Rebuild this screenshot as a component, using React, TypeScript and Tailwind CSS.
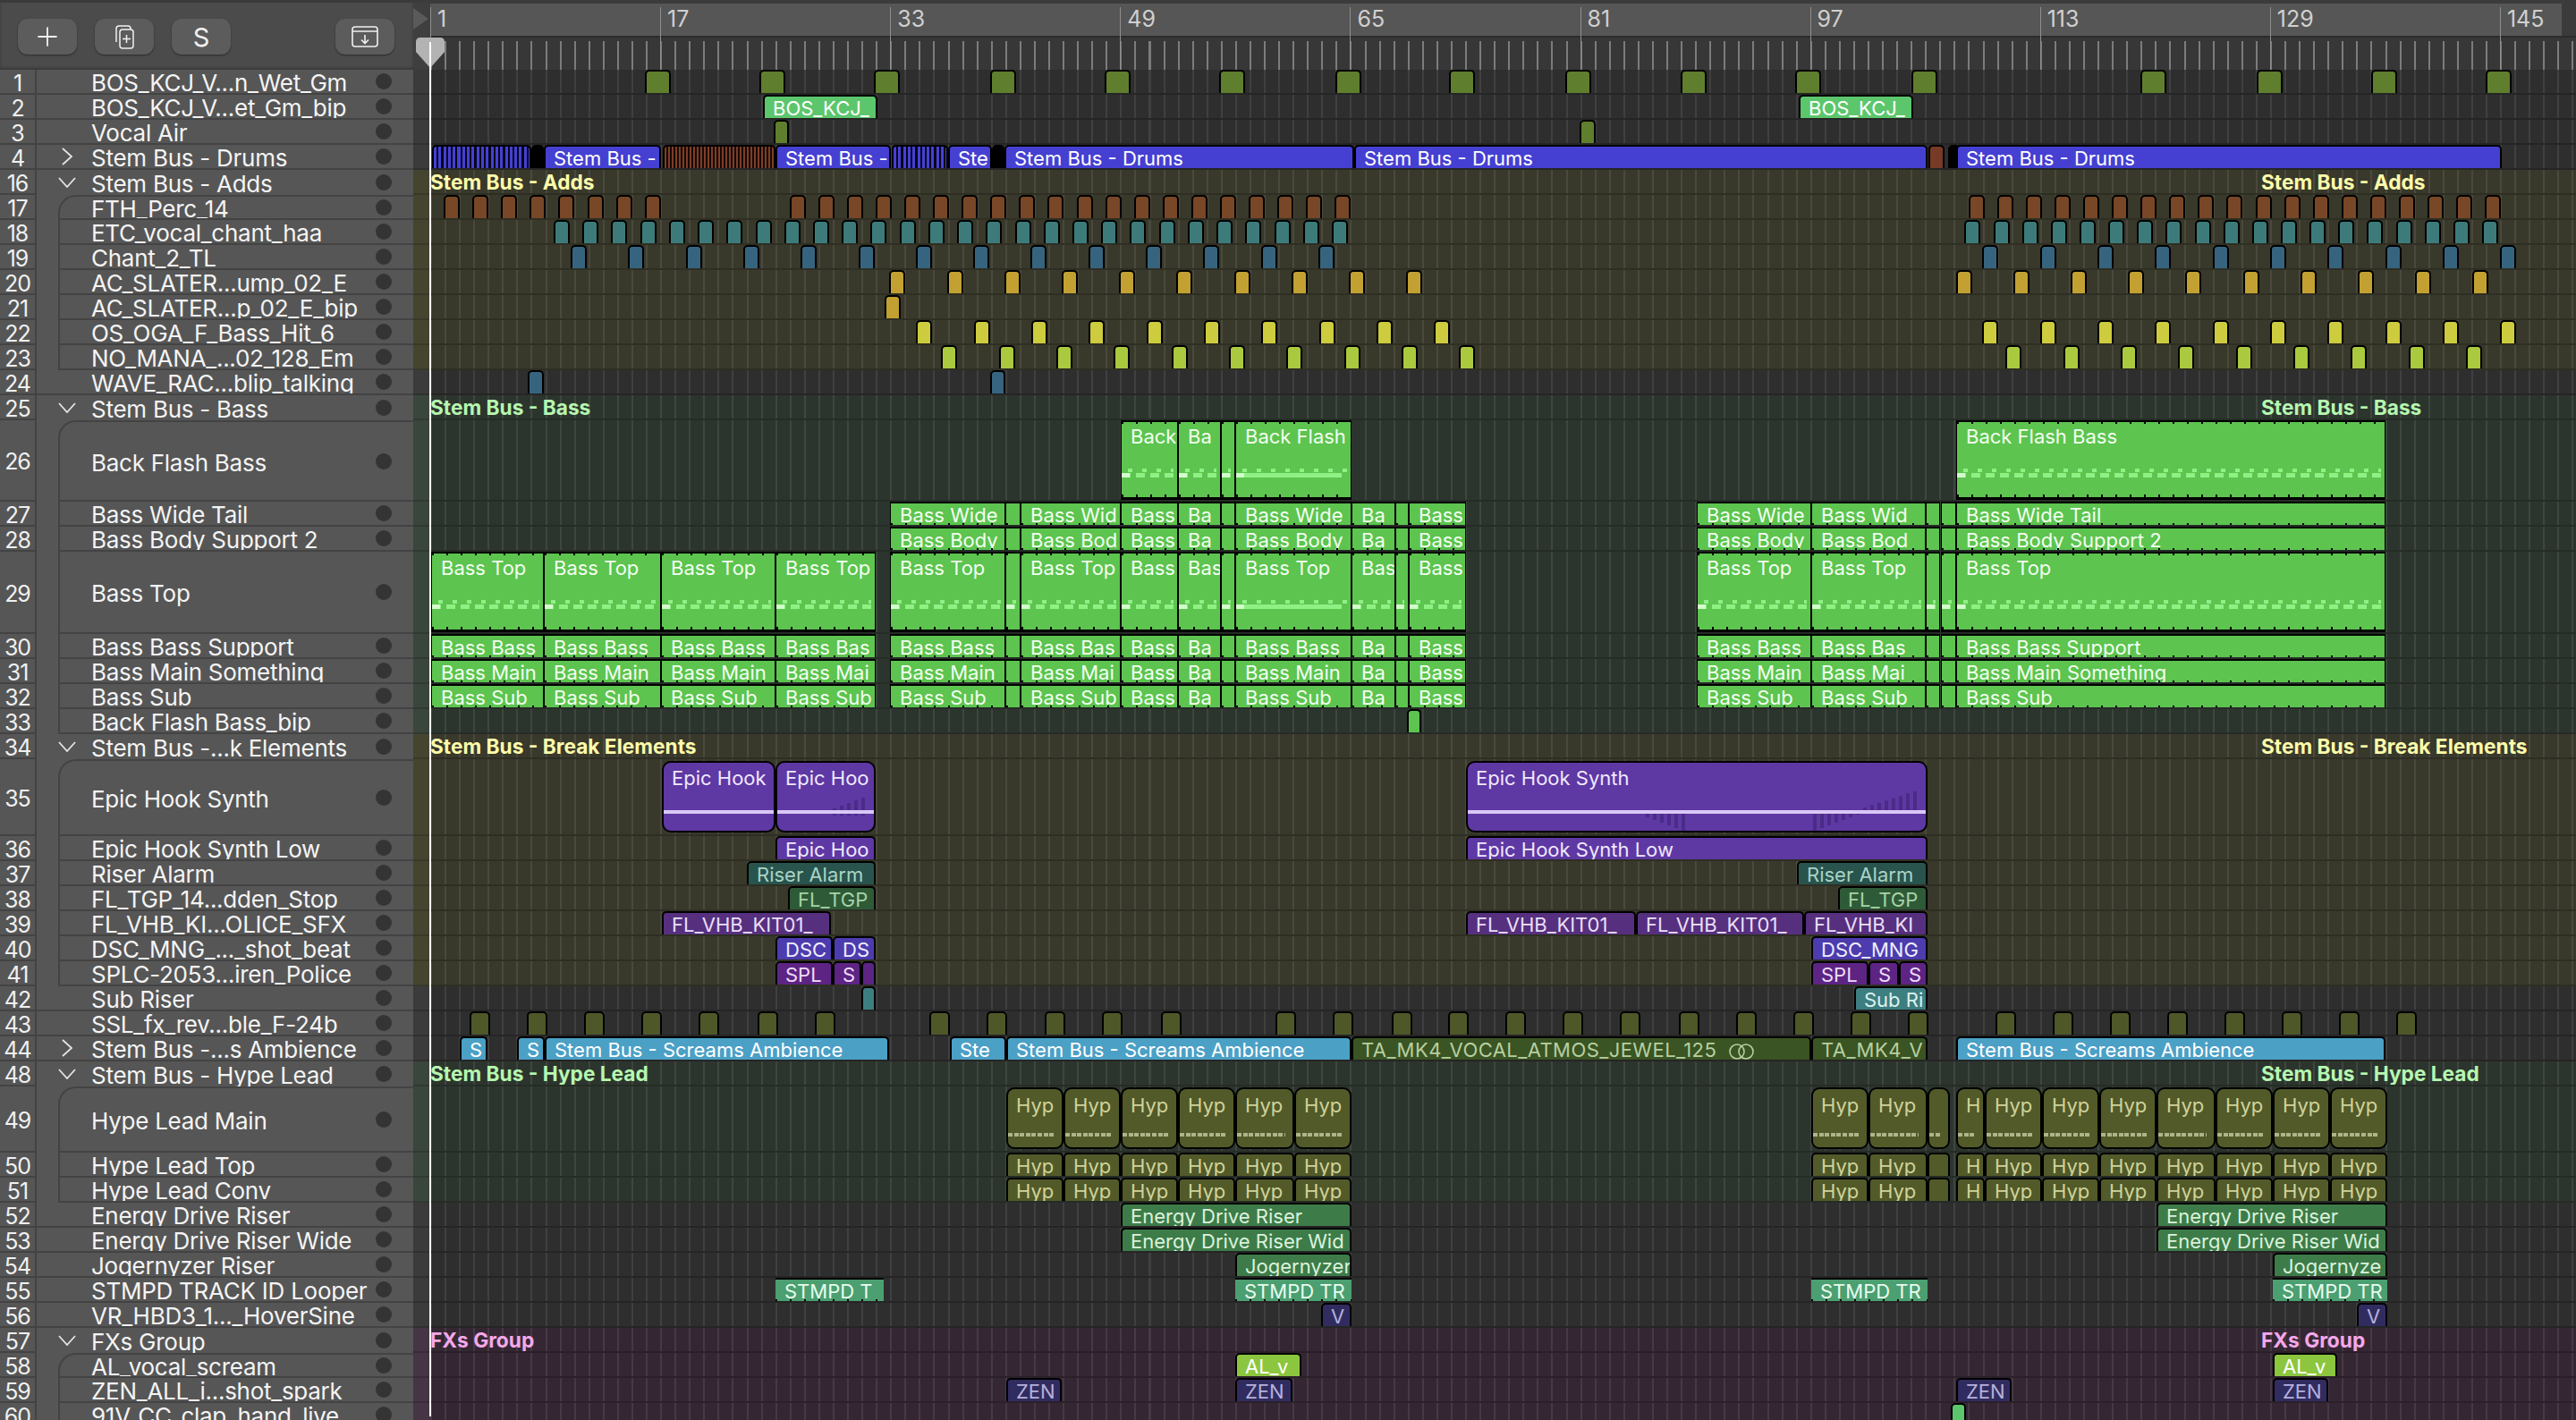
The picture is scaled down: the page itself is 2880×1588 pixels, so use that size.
import React from 'react';
import { Plus } from 'lucide-react';

type ClipData = { x0: number; x1: number; s: string; t?: string; kind?: 'midi' | 'hook' | 'hyp' | 'flat' | 'stmpd'; };
type Track = {
  num: number; name: string; h?: string; tint: string; chevron?: 'right' | 'down';
  nested?: boolean; first?: boolean; clips?: ClipData[]; label?: string;
};

const ORIGIN = 481;

const STYLES: Record<string, string> = {
  olive: 'bg-[#5f7e2e] text-white',
  mint: 'bg-[#5cc66d] text-white',
  drums: 'bg-[#4540d2] text-white',
  blueStripe: 'bg-[repeating-linear-gradient(90deg,#4540d2_0_3px,#05051c_3px_5.3px)]',
  redStripe: 'bg-[repeating-linear-gradient(90deg,#7f3d27_0_2.4px,#150a06_2.4px_4px)]',
  red: 'bg-[#773a26]',
  black: 'bg-black',
  brown: 'bg-[#774727]',
  teal: 'bg-[#3d7b7b]',
  steel: 'bg-[#36647f]',
  gold: 'bg-[#c2a132]',
  yellow: 'bg-[#cdcb3e]',
  lime: 'bg-[#abc93e]',
  green: 'bg-[#5cc44f] text-[#f3fff0]',
  purple: 'bg-[#5e38a3] text-[#f0e8ff]',
  riser: 'bg-[#28544d] text-[#a9d3c6]',
  tgp: 'bg-[#2f5a37] text-[#a8d3a5]',
  vhb: 'bg-[#56307f] text-[#ecdff8]',
  dsc: 'bg-[#4c3cad] text-[#f0edff]',
  spl: 'bg-[#5d2484] text-[#eedcf8]',
  sub: 'bg-[#3d7e81] text-[#dcf3ee]',
  ssl: 'bg-[#4e5728]',
  scream: 'bg-[#4ba0c6] text-white',
  atmos: 'bg-[#3a5423] text-[#b7cfa0] tracking-[0.02em]',
  hyp: 'bg-[#525a29] text-[#cfd39a]',
  energy: 'bg-[#3d7c49] text-[#dcf2dc]',
  stmpd: 'bg-[#4b9f70] text-[#e8fbef]',
  zen: 'bg-[#312c60] text-[#b5b0dc]',
  alv: 'bg-[#8cc63f] text-white',
};

const LANE: Record<string, string> = {
  n: 'bg-[#2e2e2e] border-[#252525]',
  y: 'bg-[#38382b] border-[#2e2e23]',
  g: 'bg-[#2c352d] border-[#252c26]',
  p: 'bg-[#342733] border-[#2b202a]',
};

const STRIP: Record<string, string> = {
  n: 'bg-[#3b3b3b] border-[#303030]',
  y: 'bg-[#45452f] border-[#393928]',
  g: 'bg-[#3a463b] border-[#303a31]',
  p: 'bg-[#463545] border-[#3a2b39]',
};

const LABEL: Record<string, string> = {
  y: 'text-[#fdfcaa]',
  g: 'text-[#b6f7b0]',
  p: 'text-[#f4a8ea]',
};

const c = (x0: number, x1: number, s: string, t?: string, kind?: ClipData['kind']): ClipData => ({ x0, x1, s, t, kind });
const series = (start: number, pitch: number, count: number, w: number, s: string) =>
  Array.from({ length: count }, (_, i) => c(start + i * pitch, start + i * pitch + w, s));

const bassLeft = [482, 608, 739, 867, 979];
const bassMid = [995, 1124, 1141, 1253, 1317, 1365, 1381, 1511, 1560, 1575, 1639];

function spans(edges: number[], texts: string[], kind: ClipData['kind']) {
  return edges.slice(0, -1).map((x, i) => c(x, edges[i + 1], 'green', texts[i], kind));
}

function bassRow(left: string[], mid: string[], right: string[], kind: ClipData['kind'] = 'flat') {
  return [
    ...(left.length ? spans(bassLeft, left, kind) : []),
    ...spans(bassMid, mid, kind),
    ...spans([1897, 2025, 2153], right.slice(0, 2), kind),
    c(2153, 2169, 'green', '', kind),
    c(2170, 2187, 'green', '', kind),
    c(2187, 2667, 'green', right[2], kind),
  ];
}

const hypEdges = [1125, 1189, 1253, 1317, 1381, 1447, 1511];
const hypRight = [2187, 2219, 2283, 2347, 2411, 2477, 2541, 2605, 2669];

function hypRow(kind?: ClipData['kind']) {
  return [
    ...hypEdges.slice(0, -1).map((x, i) => c(x, hypEdges[i + 1], 'hyp', 'Hyp', kind)),
    c(2025, 2089, 'hyp', 'Hyp', kind),
    c(2089, 2155, 'hyp', 'Hyp', kind),
    c(2155, 2180, 'hyp', '', kind),
    ...hypRight.slice(0, -1).map((x, i) => c(x, hypRight[i + 1], 'hyp', i === 0 ? 'H' : 'Hyp', kind)),
  ];
}

const tracks: Track[] = [
  { num: 1, name: 'BOS_KCJ_V...n_Wet_Gm', tint: 'n', clips: [721, 849, 977, 1107, 1235, 1363, 1493, 1620, 1750, 1879, 2007, 2137, 2393, 2523, 2651, 2779].map((x) => c(x, x + 29, 'olive')) },
  { num: 2, name: 'BOS_KCJ_V...et_Gm_bip', tint: 'n', clips: [c(853, 981, 'mint', 'BOS_KCJ_'), c(2011, 2139, 'mint', 'BOS_KCJ_')] },
  { num: 3, name: 'Vocal Air', tint: 'n', clips: [c(865, 882, 'olive'), c(1766, 1784, 'olive')] },
  {
    num: 4, name: 'Stem Bus - Drums', tint: 'n', chevron: 'right', clips: [
      c(483, 594, 'blueStripe'), c(594, 608, 'black'), c(608, 739, 'drums', 'Stem Bus -'), c(741, 867, 'redStripe'),
      c(867, 996, 'drums', 'Stem Bus -'), c(997, 1060, 'blueStripe'), c(1060, 1109, 'drums', 'Ste'), c(1109, 1123, 'black'),
      c(1123, 1514, 'drums', 'Stem Bus - Drums'), c(1514, 2155, 'drums', 'Stem Bus - Drums'), c(2156, 2174, 'red'),
      c(2178, 2187, 'black'), c(2187, 2797, 'drums', 'Stem Bus - Drums'),
    ],
  },
  { num: 16, name: 'Stem Bus - Adds', tint: 'y', chevron: 'down', label: 'Stem Bus - Adds' },
  { num: 17, name: 'FTH_Perc_14', tint: 'y', nested: true, first: true, clips: [...series(496, 32.1, 8, 18, 'brown'), ...series(882.5, 32.1, 20, 18, 'brown'), ...series(2200.5, 32.1, 19, 18, 'brown')] },
  { num: 18, name: 'ETC_vocal_chant_haa', tint: 'y', nested: true, clips: [...series(619, 32.22, 28, 18, 'teal'), ...series(2196.4, 32.14, 19, 18, 'teal')] },
  { num: 19, name: 'Chant_2_TL', tint: 'y', nested: true, clips: [...series(638, 64.3, 14, 18, 'steel'), ...series(2216.4, 64.3, 10, 18, 'steel')] },
  { num: 20, name: 'AC_SLATER...ump_02_E', tint: 'y', nested: true, clips: [...series(994.3, 64.2, 10, 18, 'gold'), ...series(2186.5, 64.2, 10, 18, 'gold')] },
  { num: 21, name: 'AC_SLATER...p_02_E_bip', tint: 'y', nested: true, clips: [c(988.7, 1006.7, 'gold')] },
  { num: 22, name: 'OS_OGA_F_Bass_Hit_6', tint: 'y', nested: true, clips: [...series(1024.4, 64.3, 10, 18, 'yellow'), ...series(2216.4, 64.3, 10, 18, 'yellow')] },
  { num: 23, name: 'NO_MANA_...02_128_Em', tint: 'y', nested: true, clips: [...series(1052.4, 64.3, 10, 18, 'lime'), ...series(2242.4, 64.3, 9, 18, 'lime')] },
  { num: 24, name: 'WAVE_RAC...blip_talking', tint: 'n', clips: [c(590.3, 608, 'steel'), c(1106.5, 1124, 'steel')] },
  { num: 25, name: 'Stem Bus - Bass', tint: 'g', chevron: 'down', label: 'Stem Bus - Bass' },
  {
    num: 26, name: 'Back Flash Bass', h: 'h-[91px]', tint: 'g', nested: true, first: true, clips: [
      c(1253, 1317, 'green', 'Back', 'midi'), c(1317, 1365, 'green', 'Ba', 'midi'), c(1365, 1381, 'green', '', 'midi'),
      c(1381, 1511, 'green', 'Back Flash', 'midi'), c(2187, 2667, 'green', 'Back Flash Bass', 'midi'),
    ],
  },
  { num: 27, name: 'Bass Wide Tail', tint: 'g', nested: true, clips: bassRow([], ['Bass Wide', '', 'Bass Wid', 'Bass', 'Ba', '', 'Bass Wide', 'Ba', '', 'Bass'], ['Bass Wide', 'Bass Wid', 'Bass Wide Tail']) },
  { num: 28, name: 'Bass Body Support 2', tint: 'g', nested: true, clips: bassRow([], ['Bass Body', '', 'Bass Bod', 'Bass', 'Ba', '', 'Bass Body', 'Ba', '', 'Bass'], ['Bass Body', 'Bass Bod', 'Bass Body Support 2']) },
  { num: 29, name: 'Bass Top', h: 'h-[92px]', tint: 'g', nested: true, clips: bassRow(['Bass Top', 'Bass Top', 'Bass Top', 'Bass Top'], ['Bass Top', '', 'Bass Top', 'Bass', 'Bas', '', 'Bass Top', 'Bas', '', 'Bass'], ['Bass Top', 'Bass Top', 'Bass Top'], 'midi') },
  { num: 30, name: 'Bass Bass Support', tint: 'g', nested: true, clips: bassRow(['Bass Bass', 'Bass Bass', 'Bass Bass', 'Bass Bas'], ['Bass Bass', '', 'Bass Bas', 'Bass', 'Ba', '', 'Bass Bass', 'Ba', '', 'Bass'], ['Bass Bass', 'Bass Bas', 'Bass Bass Support']) },
  { num: 31, name: 'Bass Main Something', tint: 'g', nested: true, clips: bassRow(['Bass Main', 'Bass Main', 'Bass Main', 'Bass Mai'], ['Bass Main', '', 'Bass Mai', 'Bass', 'Ba', '', 'Bass Main', 'Ba', '', 'Bass'], ['Bass Main', 'Bass Mai', 'Bass Main Something']) },
  { num: 32, name: 'Bass Sub', tint: 'g', nested: true, clips: bassRow(['Bass Sub', 'Bass Sub', 'Bass Sub', 'Bass Sub'], ['Bass Sub', '', 'Bass Sub', 'Bass', 'Ba', '', 'Bass Sub', 'Ba', '', 'Bass'], ['Bass Sub', 'Bass Sub', 'Bass Sub']) },
  { num: 33, name: 'Back Flash Bass_bip', tint: 'g', nested: true, clips: [c(1573, 1589, 'green')] },
  { num: 34, name: 'Stem Bus -...k Elements', tint: 'y', chevron: 'down', label: 'Stem Bus - Break Elements' },
  { num: 35, name: 'Epic Hook Synth', h: 'h-[86px]', tint: 'y', nested: true, first: true, clips: [c(740, 867, 'purple', 'Epic Hook', 'hook'), c(867, 979, 'purple', 'Epic Hoo', 'hook'), c(1639, 2155, 'purple', 'Epic Hook Synth', 'hook')] },
  { num: 36, name: 'Epic Hook Synth Low', tint: 'y', nested: true, clips: [c(867, 979, 'purple', 'Epic Hoo'), c(1639, 2155, 'purple', 'Epic Hook Synth Low')] },
  { num: 37, name: 'Riser Alarm', tint: 'y', nested: true, clips: [c(835, 979, 'riser', 'Riser Alarm'), c(2009, 2155, 'riser', 'Riser Alarm')] },
  { num: 38, name: 'FL_TGP_14...dden_Stop', tint: 'y', nested: true, clips: [c(881, 979, 'tgp', 'FL_TGP'), c(2055, 2155, 'tgp', 'FL_TGP')] },
  { num: 39, name: 'FL_VHB_KI...OLICE_SFX', tint: 'y', nested: true, clips: [c(740, 929, 'vhb', 'FL_VHB_KIT01_'), c(1639, 1829, 'vhb', 'FL_VHB_KIT01_'), c(1829, 2017, 'vhb', 'FL_VHB_KIT01_'), c(2017, 2155, 'vhb', 'FL_VHB_KI')] },
  { num: 40, name: 'DSC_MNG_..._shot_beat', tint: 'y', nested: true, clips: [c(867, 931, 'dsc', 'DSC'), c(931, 979, 'dsc', 'DS'), c(2025, 2155, 'dsc', 'DSC_MNG')] },
  { num: 41, name: 'SPLC-2053...iren_Police', tint: 'y', nested: true, clips: [c(867, 931, 'spl', 'SPL'), c(931, 963, 'spl', 'S'), c(963, 979, 'spl'), c(2025, 2089, 'spl', 'SPL'), c(2089, 2123, 'spl', 'S'), c(2123, 2155, 'spl', 'S')] },
  { num: 42, name: 'Sub Riser', tint: 'n', clips: [c(963, 979, 'sub'), c(2073, 2155, 'sub', 'Sub Ri')] },
  { num: 43, name: 'SSL_fx_rev...ble_F-24b', tint: 'n', clips: [525, 589, 653, 717, 781, 847, 911, 1039, 1103, 1168, 1232, 1298, 1426, 1490, 1556, 1619, 1683, 1747, 1811, 1877, 1941, 2005, 2069, 2133, 2231, 2295, 2359, 2423, 2487, 2551, 2615, 2679].map((x) => c(x, x + 23, 'ssl')) },
  {
    num: 44, name: 'Stem Bus -...s Ambience', tint: 'n', chevron: 'right', clips: [
      c(514, 545, 'scream', 'S'), c(578, 609, 'scream', 'S'), c(609, 994, 'scream', 'Stem Bus - Screams Ambience'),
      c(1062, 1125, 'scream', 'Ste'), c(1125, 1511, 'scream', 'Stem Bus - Screams Ambience'),
      c(1511, 2025, 'atmos', 'TA_MK4_VOCAL_ATMOS_JEWEL_125'), c(2025, 2155, 'atmos', 'TA_MK4_V'),
      c(2187, 2667, 'scream', 'Stem Bus - Screams Ambience'),
    ],
  },
  { num: 48, name: 'Stem Bus - Hype Lead', tint: 'g', chevron: 'down', label: 'Stem Bus - Hype Lead' },
  { num: 49, name: 'Hype Lead Main', h: 'h-[74px]', tint: 'g', nested: true, first: true, clips: hypRow('hyp') },
  { num: 50, name: 'Hype Lead Top', tint: 'g', nested: true, clips: hypRow() },
  { num: 51, name: 'Hype Lead Conv', tint: 'g', nested: true, clips: hypRow() },
  { num: 52, name: 'Energy Drive Riser', tint: 'n', clips: [c(1253, 1511, 'energy', 'Energy Drive Riser'), c(2411, 2669, 'energy', 'Energy Drive Riser')] },
  { num: 53, name: 'Energy Drive Riser Wide', tint: 'n', clips: [c(1253, 1511, 'energy', 'Energy Drive Riser Wid'), c(2411, 2669, 'energy', 'Energy Drive Riser Wid')] },
  { num: 54, name: 'Jogernyzer Riser', tint: 'n', clips: [c(1381, 1511, 'energy', 'Jogernyzer'), c(2541, 2669, 'energy', 'Jogernyze')] },
  { num: 55, name: 'STMPD TRACK ID Looper', tint: 'n', clips: [c(867, 988, 'stmpd', 'STMPD T', 'stmpd'), c(1381, 1511, 'stmpd', 'STMPD TR', 'stmpd'), c(2025, 2155, 'stmpd', 'STMPD TR', 'stmpd'), c(2541, 2669, 'stmpd', 'STMPD TR', 'stmpd')] },
  { num: 56, name: 'VR_HBD3_1..._HoverSine', tint: 'n', clips: [c(1477, 1511, 'zen', 'V'), c(2635, 2669, 'zen', 'V')] },
  { num: 57, name: 'FXs Group', tint: 'p', chevron: 'down', label: 'FXs Group' },
  { num: 58, name: 'AL_vocal_scream', tint: 'p', nested: true, first: true, clips: [c(1381, 1455, 'alv', 'AL_v'), c(2541, 2613, 'alv', 'AL_v')] },
  { num: 59, name: 'ZEN_ALL_i...shot_spark', tint: 'p', nested: true, clips: [c(1125, 1187, 'zen', 'ZEN'), c(1381, 1445, 'zen', 'ZEN'), c(2187, 2249, 'zen', 'ZEN'), c(2541, 2603, 'zen', 'ZEN')] },
  { num: 60, name: '91V_CC_clap_hand_live', tint: 'p', nested: true, clips: [c(2181, 2198, 'mint')] },
];

const rulerBars = [1, 17, 33, 49, 65, 81, 97, 113, 129, 145];

function Chevron({ dir }: { dir: 'right' | 'down' }) {
  return dir === 'right' ? (
    <svg width="14" height="20" viewBox="0 0 14 20" className="text-[#e4e4e4]">
      <path d="M2 1 L12 10 L2 19" fill="none" stroke="currentColor" strokeWidth="1.8" />
    </svg>
  ) : (
    <svg width="20" height="12" viewBox="0 0 20 12" className="text-[#e4e4e4]">
      <path d="M1 1 L10 11 L19 1" fill="none" stroke="currentColor" strokeWidth="1.8" />
    </svg>
  );
}

function HookBars({ x0, x1 }: { x0: number; x1: number }) {
  const bars: { x: number; y: number; h: number }[] = [];
  if (x0 === 1639) {
    for (let i = 0; i < 6; i++) bars.push({ x: 199 + i * 8, y: 57, h: 4 + i * 3 });
    for (let i = 0; i < 7; i++) bars.push({ x: 386 + i * 8, y: 57, h: 19 - i * 3 });
    for (let i = 0; i < 8; i++) bars.push({ x: 442 + i * 8, y: 50 - i * 2.6, h: 4 + i * 2.6 });
  } else if (x0 === 867) {
    for (let i = 0; i < 5; i++) bars.push({ x: 62 + i * 8, y: 51 - i * 3, h: 8 + i * 3 });
  }
  return (
    <svg width={x1 - x0} height="80" className="absolute left-0 top-0">
      {bars.map((b, i) => <rect key={i} x={b.x} y={b.y} width="4" height={b.h} fill="#4a2c88" />)}
    </svg>
  );
}

function Clip({ clip }: { clip: ClipData }) {
  const { x0, x1, s, t, kind } = clip;
  const shape =
    kind === 'hook' ? 'top-[2px] bottom-[2px] border-2 rounded-[10px] pl-[9px] pt-[6px]' :
    kind === 'hyp' ? 'top-[1px] bottom-[2px] border-2 rounded-[9px] pl-[9px] pt-[7px]' :
    kind === 'midi' ? 'top-0 bottom-0 border-x-[1px] border-t-2 border-b-[3px] pl-[10px] pt-[5px]' :
    kind === 'flat' ? 'top-0 bottom-0 border-x-[1px] border-t-2 pl-[10px] pt-[2px]' :
    kind === 'stmpd' ? 'top-0 bottom-0 border-t-2 pl-[10px] pt-[2px]' :
    'top-0 bottom-0 border-x-2 border-t-2 rounded-t-[5px] pl-[9px] pt-[2px]';
  return (
    <div
      className={`absolute box-border overflow-hidden whitespace-nowrap border-black text-[22px] leading-[22px] ${shape} ${STYLES[s]}`}
      style={{ left: x0 - ORIGIN, width: x1 - x0 }}
    >
      {t}
      {t?.endsWith('JEWEL_125') && (
        <svg width="28" height="20" viewBox="0 0 28 20" className="ml-[14px] inline-block align-[-4px] text-[#b7cfa0]">
          <circle cx="9" cy="10" r="8" fill="none" stroke="currentColor" strokeWidth="1.6" />
          <circle cx="19" cy="10" r="8" fill="none" stroke="currentColor" strokeWidth="1.6" />
        </svg>
      )}
      {kind === 'midi' && (
        <>
          <div className="absolute left-0 right-0 top-0 h-[2px] bg-[repeating-linear-gradient(90deg,#000_0_2px,transparent_2px_16.07px)]" />
          <div className="absolute left-0 right-0 bottom-0 h-[3px] bg-[repeating-linear-gradient(90deg,#000_0_2px,transparent_2px_16.07px)]" />
          <div className="absolute left-[7px] right-[4px] top-[52px] h-[4px] bg-[repeating-linear-gradient(90deg,#8ff084_0_5px,transparent_5px_16px)]" />
          {x0 === 1381 ? (
            <div className="absolute left-0 right-[10px] top-[57px] h-[5px] bg-[#8ff084]" />
          ) : (
            <div className="absolute left-0 right-[4px] top-[57px] h-[5px] bg-[repeating-linear-gradient(90deg,#8ff084_0_10px,transparent_10px_16px)]" />
          )}
          <div className="absolute left-0 top-[57px] h-[5px] w-[9px] bg-[#d2fccb]" />
        </>
      )}
      {kind === 'hook' && (
        <>
          <HookBars x0={x0} x1={x1} />
          <div className="absolute inset-x-0 top-[53px] h-[4px] bg-[#d9c7f7]" />
        </>
      )}
      {kind === 'hyp' && (
        <div className="absolute left-0 right-[8px] top-[49px] h-[4px] bg-[repeating-linear-gradient(90deg,#b0b489_0_5px,transparent_5px_6.6px)]" />
      )}
      {(kind === 'flat' || kind === 'stmpd') && (
        <div className="absolute inset-x-0 bottom-0 h-[2px] bg-[repeating-linear-gradient(90deg,#000_0_2px,transparent_2px_16.07px)]" />
      )}
    </div>
  );
}

function TrackRow({ track }: { track: Track }) {
  const { num, name, h, tint, chevron, nested, first, clips, label } = track;
  const groupOpen = chevron === 'down';
  return (
    <div className={`flex shrink-0 ${h ?? 'h-[28px]'}`}>
      <div className="flex w-[462px] shrink-0 bg-[#565656]">
        <div className="flex w-[41px] shrink-0 items-center justify-center border-b-2 border-r-2 border-[#434343] pt-[3px] text-[25px] leading-[22px] tracking-[-0.04em] text-[#f0f0f0]">
          {num}
        </div>
        {nested && <div className="w-[24px] shrink-0" />}
        <div
          className={`flex min-w-0 flex-1 items-center overflow-hidden border-[#434343] pr-[24px] ${groupOpen ? '' : 'border-b-2'} ${nested ? 'border-l-2 pl-[35px]' : 'pl-[61px]'} ${first ? 'rounded-tl-[20px] border-t-2' : ''}`}
        >
          <div className="relative min-w-0 flex-1 whitespace-nowrap pt-[4px] text-[26px] leading-[22px] tracking-[-0.01em] text-[#f4f4f4]">
            {chevron && (
              <span className={`absolute top-1/2 -translate-y-1/2 ${chevron === 'right' ? 'left-[-34px]' : 'left-[-37px]'}`}>
                <Chevron dir={chevron} />
              </span>
            )}
            {name}
          </div>
          <div className="h-[18px] w-[18px] shrink-0 rounded-full bg-[#343434]" />
        </div>
      </div>
      <div className={`w-[19px] shrink-0 border-b-2 ${STRIP[tint]}`} />
      <div className={`relative flex-1 overflow-hidden border-b-2 bg-[repeating-linear-gradient(90deg,rgba(255,255,255,0.085)_0_2px,transparent_2px_16.07px)] ${LANE[tint]}`}>
        {label && (
          <>
            <div className={`absolute left-0 top-[2px] text-[22.7px] font-bold leading-[24px] ${LABEL[tint]}`}>{label}</div>
            <div className={`absolute left-[2047px] top-[2px] text-[22.7px] font-bold leading-[24px] ${LABEL[tint]}`}>{label}</div>
          </>
        )}
        {clips?.map((clip, i) => <Clip key={i} clip={clip} />)}
      </div>
    </div>
  );
}

function ToolButton({ children }: { children: React.ReactNode }) {
  return (
    <button className="flex h-[40px] w-[66px] items-center justify-center rounded-[11px] bg-[#5c5c5c] text-[#f0f0f0] shadow-[0_1px_2px_rgba(0,0,0,0.45)]">
      {children}
    </button>
  );
}

function Toolbar() {
  return (
    <div className="flex h-[78px] shrink-0">
      <div className="flex w-[462px] shrink-0 items-center gap-[20px] border-t-[3px] border-[#3b3b3b] bg-[#4b4b4b] pl-[20px] pt-[1px] shadow-[inset_0_-2px_3px_rgba(0,0,0,0.25)]">
        <ToolButton><Plus size={34} strokeWidth={1.3} /></ToolButton>
        <ToolButton>
          <svg width="30" height="28" viewBox="0 0 30 28" fill="none" stroke="currentColor" strokeWidth="1.5">
            <path d="M10 2 H19 Q22 2 22 5 V6 M6 20 V5 Q6 2 9 2 H10" />
            <rect x="10" y="6" width="15" height="21" rx="3" />
            <path d="M17.5 12 V21 M13 16.5 H22" />
          </svg>
        </ToolButton>
        <ToolButton><span className="text-[29px] leading-none">S</span></ToolButton>
        <div className="ml-auto mr-[21px]">
          <ToolButton>
            <svg width="32" height="26" viewBox="0 0 32 26" fill="none" stroke="currentColor" strokeWidth="1.6">
              <rect x="2" y="2" width="28" height="22" rx="3" />
              <path d="M2 7 H30 M16 11 V20 M12 16.5 L16 20.5 L20 16.5" />
            </svg>
          </ToolButton>
        </div>
      </div>
      <div className="w-[19px] shrink-0 border-t-[3px] border-[#3b3b3b] bg-[#3f3f3f]" />
      <div className="relative flex-1 bg-[#3b3b3b]">
        <div className="mt-[4px] h-[36px] w-[2383px] bg-[#565656]" />
        <div className="h-[38px] border-t-2 border-[#2c2c2c] bg-[#373737] bg-[repeating-linear-gradient(90deg,#7c7c7c_0_2px,transparent_2px_16.07px)] bg-[length:100%_32px] bg-bottom bg-no-repeat" />
        {rulerBars.map((bar) => (
          <div key={bar} className="absolute bottom-0 top-[8px] border-l border-[#8f8f8f] pl-[7px]" style={{ left: ((bar - 1) / 16) * 257.1 }}>
            <span className="block text-[25px] leading-[26px] text-[#d0d0d0]">{bar}</span>
          </div>
        ))}
      </div>
    </div>
  );
}

export default function App() {
  return (
    <div className="relative h-[1588px] w-[2880px] overflow-hidden bg-[#2e2e2e] [font-family:Inter,sans-serif]">
      <Toolbar />
      {tracks.map((track) => <TrackRow key={track.num} track={track} />)}

      <svg width="18" height="24" viewBox="0 0 18 24" className="absolute left-[462px] top-[9px]">
        <path d="M0 0 L17 12 L0 24 Z" fill="#5a5a5a" />
      </svg>
      <svg width="34" height="36" viewBox="0 0 34 36" className="absolute left-[464px] top-[41px]">
        <path d="M6 1 H28 Q33 1 33 6 V17 L17 35 L1 17 V6 Q1 1 6 1 Z" fill="#b3b3b3" />
      </svg>
      <div className="absolute left-[480px] top-[47px] h-[1537px] w-[2px] bg-white" />
    </div>
  );
}
